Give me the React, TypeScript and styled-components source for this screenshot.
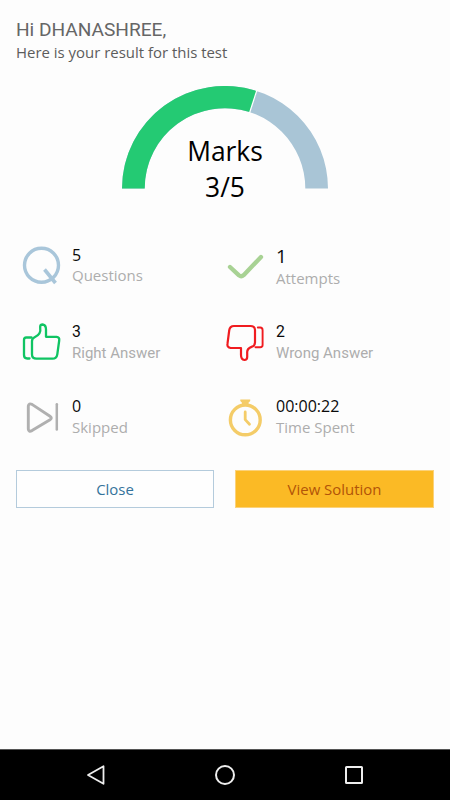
import React from "react";
import styled, { createGlobalStyle } from "styled-components";

const OPEN = '"Open Sans", "Noto Sans", sans-serif';
const ROBOTO = 'Roboto, "Noto Sans", sans-serif';

const GlobalStyle = createGlobalStyle`
  * { box-sizing: border-box; }
  body { margin: 0; background: #fdfdfd; font-family: ${OPEN}; }
`;

const Screen = styled.main`
  width: 450px;
  height: 800px;
  display: flex;
  flex-direction: column;
  background: #fdfdfd;
  overflow: hidden;
`;

const Header = styled.header`
  height: 86px;
  padding: 18px 16px 0;
  color: #5c5c5c;
  white-space: nowrap;
`;

const Greeting = styled.h1`
  margin: 0;
  font: 400 19.1px/24px ${ROBOTO};
  color: #666;
`;

const Subtitle = styled.p`
  margin: 0;
  font: 400 14.95px/20px ${OPEN};
`;

const Gauge = styled.section`
  display: grid;
  justify-content: center;
  height: 158px;
  > * { grid-area: 1 / 1; }
`;

const Score = styled.div`
  padding-top: 47px;
  text-align: center;
  font: 400 26.4px/36px ${OPEN};
  color: #000;
`;

const Stats = styled.section`
  display: grid;
  grid-template-columns: 204px 204px;
  grid-template-rows: 78px 75px 73px;
  padding-left: 20px;
`;

const Stat = styled.div`
  display: flex;
  gap: 8px;
`;

const Texts = styled.div`
  white-space: nowrap;
`;

type LineProps = { $size: number; $line: number; $roboto?: boolean; $top?: number };

const Value = styled.div<LineProps>`
  margin-top: ${(p) => p.$top ?? 0}px;
  font: 400 ${(p) => p.$size}px/${(p) => p.$line}px ${(p) => (p.$roboto ? ROBOTO : OPEN)};
  color: #0a0a0a;
`;

const Label = styled(Value)`
  color: #adadad;
`;

const Actions = styled.section`
  display: grid;
  grid-template-columns: 198px 199px;
  column-gap: 21px;
  padding-left: 16px;
`;

const Button = styled.button<{ $primary?: boolean }>`
  height: 38px;
  padding: 0 0 1px;
  border: 1px solid ${(p) => (p.$primary ? "#fbd27a" : "#b4cbdc")};
  border-radius: 0;
  background: ${(p) => (p.$primary ? "#fbba25" : "#fefefe")};
  color: ${(p) => (p.$primary ? "#b25408" : "#34739b")};
  font: 400 14.95px/20px ${OPEN};
`;

const NavBar = styled.nav`
  display: flex;
  align-items: center;
  justify-content: space-between;
  height: 51px;
  margin-top: auto;
  padding: 0 84px 1px 84px;
  border-top: 1px solid #555;
  background: #000;
`;

const IconSvg = styled.svg<{ $top: number }>`
  margin-top: ${(p) => p.$top}px;
`;

const Icon = ({ top = 0, children }: { top?: number; children: React.ReactNode }) => (
  <IconSvg $top={top} width="44" height="44" viewBox="0 0 44 44" fill="none" strokeLinecap="round" strokeLinejoin="round">
    {children}
  </IconSvg>
);

const QuestionIcon = () => (
  <Icon top={1}>
    <circle cx="21.5" cy="20.3" r="17" stroke="#a9c6da" strokeWidth="3.4" />
    <path d="M24.5 24.5 35.5 38" stroke="#a9c6da" strokeWidth="3.6" strokeLinecap="butt" />
  </Icon>
);

const CheckIcon = () => (
  <Icon top={1}>
    <path d="M6 22 15 30.4Q17.3 32.2 19.6 30.2L37 12" stroke="#a8d294" strokeWidth="4.3" />
  </Icon>
);

const ThumbUpIcon = () => (
  <Icon>
    <g stroke="#10c463" strokeWidth="2.3">
      <path d="M11.5 15.5H6.3Q4 15.5 4 18V33Q4 36.5 7.2 36.5H9.5" />
      <path d="M15 15Q21.3 12 20.2 6V4.5Q20.3 2.5 22.7 2.5Q26 3 26 7.5V14.8H36.5Q39.8 15.3 39.2 18.5L37.3 32.3Q36.6 36.7 32.5 36.7H16.5Q12 36.7 12 32.5V19Q12 16.4 15 15Z" />
    </g>
  </Icon>
);

const ThumbDownIcon = () => (
  <Icon>
    <g stroke="#f01c20">
      <path strokeWidth="2.2" d="M10 4H26.5Q31 4 31 8V20.5Q31 24 27.5 24.9Q22.8 26.7 23.2 31V35Q23.2 38 20.4 38Q17 37.5 17 33V26H6.7Q2.9 25.5 3.5 21.7L5.2 8.5Q5.8 4 10 4Z" />
      <path strokeWidth="1.9" d="M33.8 5.5H36.2Q38.6 5.5 38.6 8.2V23Q38.6 25.2 36.2 25.2H31.5" />
    </g>
  </Icon>
);

const SkipIcon = () => (
  <Icon>
    <path d="M8.3 9V32Q8.6 35.3 12 33.6L30 22.7Q32.6 21 30 19.2L12 7.4Q8.7 5.9 8.3 9Z" stroke="#b0b0b0" strokeWidth="2.9" />
    <path d="M36.8 7.3V32.5" stroke="#b0b0b0" strokeWidth="2.5" />
  </Icon>
);

const TimerIcon = () => (
  <Icon>
    <g stroke="#f4cc68" strokeLinecap="butt">
      <circle cx="21.3" cy="22.9" r="14.9" strokeWidth="3.4" />
      <path d="M16.3 2.4H26.2V4L24.5 5.8V8H18V5.8L16.3 4Z" fill="#f4cc68" stroke="none" />
      <path d="M21.2 15V22.6L25.5 27.2" strokeWidth="2.8" strokeLinecap="round" />
    </g>
  </Icon>
);

export default function App() {
  return (
    <>
      <GlobalStyle />
      <Screen>
        <Header>
          <Greeting>Hi DHANASHREE,</Greeting>
          <Subtitle>Here is your result for this test</Subtitle>
        </Header>

        <Gauge>
          <svg width="206" height="103" viewBox="0 0 206 103">
            <path d="M0 102.5A103 102.5 0 0 1 206 102.5H183.3A80.3 80.3 0 0 0 22.7 102.5Z" fill="#a9c5d6" />
            <path d="M0 102.5A103 102.5 0 0 1 134.8 5L127.8 26.1A80.3 80.3 0 0 0 22.7 102.5Z" fill="#24ca73" />
            <path d="M134.8 4.5 127.5 27" stroke="#fff" strokeWidth="1.2" />
          </svg>
          <Score>
            <div>Marks</div>
            <div>3/5</div>
          </Score>
        </Gauge>

        <Stats>
          <Stat>
            <QuestionIcon />
            <Texts>
              <Value $size={16} $line={20} $top={1}>5</Value>
              <Label $size={15} $line={20}>Questions</Label>
            </Texts>
          </Stat>
          <Stat>
            <CheckIcon />
            <Texts>
              <Value $size={19} $line={24}>1</Value>
              <Label $size={15} $line={20}>Attempts</Label>
            </Texts>
          </Stat>
          <Stat>
            <ThumbUpIcon />
            <Texts>
              <Value $size={15.8} $line={20} $roboto>3</Value>
              <Label $size={15} $line={20} $roboto $top={1}>Right Answer</Label>
            </Texts>
          </Stat>
          <Stat>
            <ThumbDownIcon />
            <Texts>
              <Value $size={15.8} $line={20} $roboto>2</Value>
              <Label $size={15} $line={20} $roboto $top={1}>Wrong Answer</Label>
            </Texts>
          </Stat>
          <Stat>
            <SkipIcon />
            <Texts>
              <Value $size={16} $line={20} $top={-1}>0</Value>
              <Label $size={15} $line={20} $top={1}>Skipped</Label>
            </Texts>
          </Stat>
          <Stat>
            <TimerIcon />
            <Texts>
              <Value $size={16} $line={20} $top={-1}>00:00:22</Value>
              <Label $size={15} $line={20} $top={1}>Time Spent</Label>
            </Texts>
          </Stat>
        </Stats>

        <Actions>
          <Button>Close</Button>
          <Button $primary>View Solution</Button>
        </Actions>

        <NavBar>
          <svg width="24" height="24" viewBox="0 0 24 24" fill="none" stroke="#eee" strokeWidth="1.8" strokeLinejoin="round">
            <path d="M4 12 19.5 3.2V20.8Z" />
          </svg>
          <svg width="24" height="24" viewBox="0 0 24 24" fill="none" stroke="#eee" strokeWidth="2">
            <circle cx="12" cy="12" r="9" />
          </svg>
          <svg width="24" height="24" viewBox="0 0 24 24" fill="none" stroke="#eee" strokeWidth="2">
            <rect x="4" y="4" width="16" height="16" rx="0.5" />
          </svg>
        </NavBar>
      </Screen>
    </>
  );
}
